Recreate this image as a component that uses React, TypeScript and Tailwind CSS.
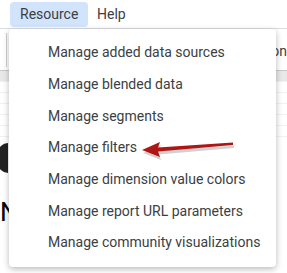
const items = [
  'Manage added data sources',
  'Manage blended data',
  'Manage segments',
  'Manage filters',
  'Manage dimension value colors',
  'Manage report URL parameters',
  'Manage community visualizations',
];

export default function App() {
  return (
    <div className="relative w-[287px] h-[273px] overflow-hidden bg-white font-['Roboto',sans-serif]">
      {/* menu bar */}
      <div className="flex items-center h-[29px] border-b border-[#dadce0] pl-[10px] text-[14px] text-[#3c4043]">
        <div className="flex items-center h-[25px] w-[78px] rounded-[4px] bg-[#d2e3fc] pl-[10px]">Resource</div>
        <div className="ml-[9px]">Help</div>
      </div>

      {/* page behind the menu */}
      <div className="flex flex-col">
        <div className="flex items-center h-[42px] border-b border-[#c8c8c8]">
          <div className="w-[7px] h-[34px] border-r border-[#d0d0d0]" />
          <div className="ml-auto mt-[4px] text-[14px] text-[#3c4043]">on</div>
        </div>
        <div className="h-[10px] bg-[#e8e8e8]" />
        <div className="h-[62px] bg-[linear-gradient(#f1f1f1_1px,transparent_1px)] bg-[length:100%_11px]" />
        <div className="flex flex-col">
          <div className="w-[10px] h-[30px] bg-[#222] rounded-l-[15px] ml-[-2px]" />
          <div className="mt-[26px] text-[26px] leading-none text-black">N</div>
        </div>
      </div>

      {/* dropdown */}
      <div className="absolute left-[9px] top-[29px] w-[267px] rounded-[4px] bg-white py-[8px] shadow-[0_2px_6px_rgba(0,0,0,0.28)]">
        {items.map((label) => (
          <div key={label} className="flex items-center h-[31.7px] pl-[39px] text-[14px] text-[#3c4043] whitespace-nowrap">
            {label}
          </div>
        ))}
      </div>

      {/* red arrow */}
      <svg className="absolute left-[138px] top-[135px]" width="100" height="28" viewBox="0 0 100 28">
        <g transform="translate(1,3)" fill="#000" opacity="0.18">
          <path d="M4 15 L22 7 L20 12.5 L95 7.5 L95 10 L20 16.5 L22 22 Z" />
        </g>
        <path d="M4 15 L22 7 L20 12.5 L95 7.5 L95 10 L20 16.5 L22 22 Z" fill="#b01515" />
      </svg>
    </div>
  );
}
